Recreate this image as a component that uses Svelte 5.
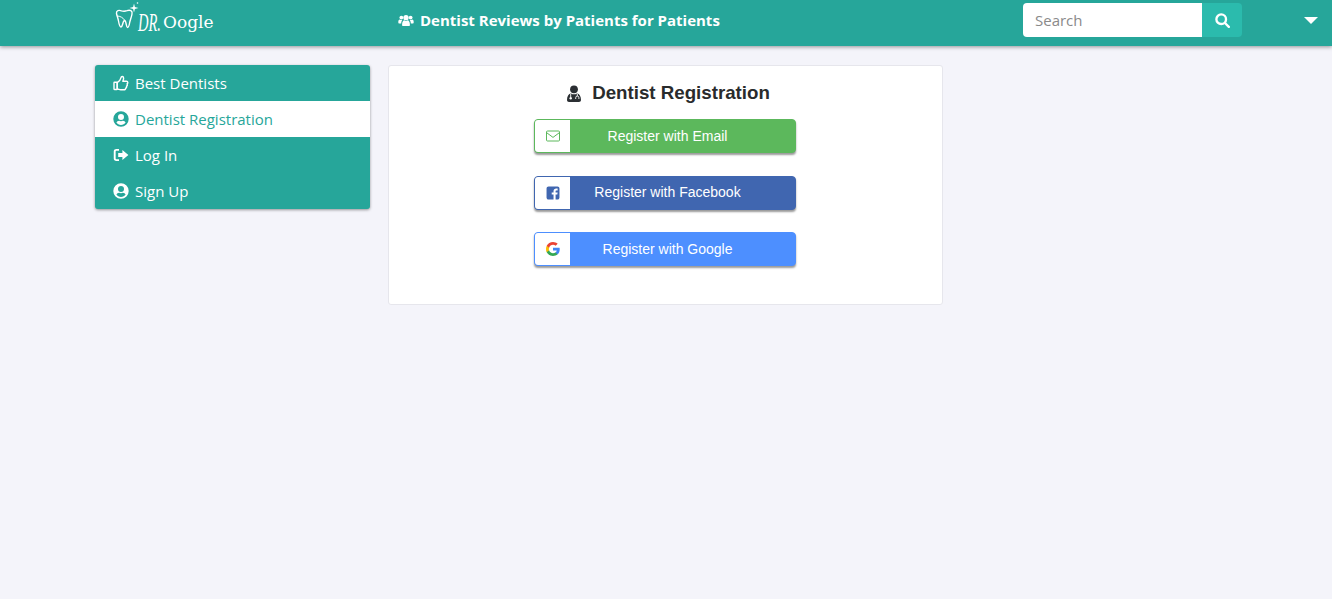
<script>
  const menu = [
    { label: 'Best Dentists', icon: 'thumb' },
    { label: 'Dentist Registration', icon: 'user', active: true },
    { label: 'Log In', icon: 'signout' },
    { label: 'Sign Up', icon: 'user' }
  ];
  const buttons = [
    { label: 'Register with Email', cls: 'email', icon: 'mail' },
    { label: 'Register with Facebook', cls: 'fb', icon: 'fb' },
    { label: 'Register with Google', cls: 'google', icon: 'g' }
  ];
</script>

{#snippet menuIcon(name)}
  {#if name === 'thumb'}
    <svg class="mi" viewBox="0 0 16 16" fill="none" stroke="currentColor" stroke-width="1.4" stroke-linejoin="round">
      <rect x="1" y="7.2" width="3.2" height="7.3" rx="0.5" />
      <path d="M4.2 7.6 C6 6.6 7.6 4.6 8 2.6 C8.2 1.2 10.4 1 10.6 3 C10.8 4.4 10 5.4 9.8 6.2 H13.4 C15.2 6.2 15.2 8.4 14 8.8 C14.8 9.8 14.2 11 13.5 11.2 C13.9 12.2 13.2 13.2 12.5 13.3 C12.7 14.3 12 14.8 11 14.8 H7.6 C6.4 14.8 5.4 14 4.2 14 Z" />
    </svg>
  {:else if name === 'user'}
    <svg class="mi" viewBox="0 0 16 16">
      <path fill="currentColor" fill-rule="evenodd" d="M8 .3a7.7 7.700 0 1 0 0 15.400A7.700 7.700 0 0 0 8 .3ZM8 3a3 3 0 1 1 0 6A3 3 0 0 1 8 3ZM8 13.900c-1.900 0-3.600-.9-4.600-2.300.4-1.100 1.500-1.900 2.700-1.900.6.300 1.200.5 1.900.5s1.300-.2 1.900-.5c1.200 0 2.300.8 2.700 1.900-1 1.400-2.700 2.300-4.600 2.300Z" />
    </svg>
  {:else}
    <svg class="mi" viewBox="0 0 16 16">
      <path fill="none" stroke="currentColor" stroke-width="1.900" d="M6 2.900H3.400C2.400 2.900 1.700 3.500 1.700 4.400v7.200c0 .9.700 1.500 1.700 1.500H6" />
      <path fill="currentColor" d="M9.400 2.900 15.400 8l-6 5.100V10.100H5.200V5.900h4.200Z" />
    </svg>
  {/if}
{/snippet}

{#snippet btnIcon(name)}
  {#if name === 'mail'}
    <svg class="bi" viewBox="0 0 14 12" fill="none" stroke="#5cb85c" stroke-width="1">
      <rect x="0.5" y="1" width="13" height="10" rx="1" />
      <path d="M0.8 2.800 7 7.400l6.200-4.600" />
    </svg>
  {:else if name === 'fb'}
    <svg class="bi" viewBox="0 0 13 13">
      <path fill="#4066b0" d="M2.400.5h8.200c1.100 0 1.900.8 1.900 1.900v8.200c0 1.100-.8 1.900-1.900 1.900H8.900V8h1.600l.3-1.900H8.900V5c0-.6.2-.9.9-.9h1V2.400c-.3 0-.8-.1-1.300-.1-1.500 0-2.500.9-2.500 2.500v1.300H5.300V8H7v4.500H2.400c-1.100 0-1.900-.8-1.900-1.900V2.400C.5 1.300 1.300.5 2.400.5Z" />
    </svg>
  {:else}
    <svg class="bi" viewBox="0 0 18 18">
      <path fill="#4285F4" d="M17.640 9.200c0-.637-.057-1.251-.164-1.840H9v3.481h4.844c-.209 1.125-.843 2.078-1.796 2.717v2.258h2.908c1.702-1.567 2.684-3.874 2.684-6.615z" />
      <path fill="#34A853" d="M9 18c2.430 0 4.467-.806 5.956-2.180l-2.908-2.259c-.806.540-1.837.860-3.048.860-2.344 0-4.328-1.584-5.036-3.711H.957v2.332C2.438 15.983 5.482 18 9 18z" />
      <path fill="#FBBC05" d="M3.964 10.710c-.180-.540-.282-1.117-.282-1.710s.102-1.170.282-1.710V4.958H.957C.347 6.173 0 7.548 0 9s.348 2.827.957 4.042l3.007-2.332z" />
      <path fill="#EA4335" d="M9 3.580c1.321 0 2.508.454 3.440 1.345l2.582-2.580C13.463.891 11.426 0 9 0 5.482 0 2.438 2.017.957 4.958L3.964 7.290C4.672 5.163 6.656 3.580 9 3.580z" />
    </svg>
  {/if}
{/snippet}

<header class="nav">
  <a class="logo" href="#top">
    <svg class="tooth" viewBox="0 0 26 30" fill="none" stroke="#fff" stroke-width="1.400" stroke-linecap="round">
      <path d="M2.500 13.500 C2 10.500 5 9.800 7.500 10.800 C9.500 11.500 11 11.400 13 10.700 C16 9.500 18.800 10.800 18 14 C17.500 17 16.500 19 15.800 22 C15.300 25 14.500 27.500 13.500 27.500 C12.500 27.500 12.500 24 11.500 21.500 C11 20.500 10 20.500 9.500 21.500 C8.500 24 8.300 27 7 27 C5.700 27 5 24 4.500 21 C4 18 3 16 2.500 13.500 Z" />
      <path d="M3.500 16 C6 16 9 17.500 11 20.500" stroke-width="1" />
      <path fill="#fff" stroke="none" d="M20 3.500 20.900 7.100 24.500 8 20.900 8.900 20 12.500 19.100 8.900 15.500 8 19.100 7.100Z" />
      <circle cx="23.500" cy="3" r="0.800" fill="#fff" stroke="none" />
    </svg>
    <span class="dr">DR.</span><span class="oogle">Oogle</span>
  </a>
  <div class="tagline">
    <svg class="users" viewBox="0 0 18 14" fill="#fff">
      <circle cx="9" cy="4.300" r="3.100" /><circle cx="3.600" cy="4.200" r="2.200" /><circle cx="14.400" cy="4.200" r="2.200" />
      <path d="M4.400 12.800c0-3.600 1.500-5.400 2.600-5.400.6.400 1.200.7 2 .7s1.400-.3 2-.7c1.100 0 2.600 1.800 2.600 5.400 0 .7-.6 1.200-1.200 1.200H5.600c-.6 0-1.200-.5-1.200-1.200Z" />
      <path d="M0 9.500c0-1.800.6-3 1.800-3 .5.400 1.100.6 1.800.6.300 0 .6 0 1-.1-.7 1-1.200 2.500-1.200 4H1.200C.5 11 0 10.400 0 9.500Z" />
      <path d="M18 9.500c0-1.800-.6-3-1.800-3-.5.400-1.100.6-1.800.6-.3 0-.6 0-1-.1.700 1 1.200 2.500 1.200 4h2.200c.7 0 1.200-.6 1.200-1.500Z" />
    </svg>
    <span>Dentist Reviews by Patients for Patients</span>
  </div>
  <form class="search" onsubmit={(e) => e.preventDefault()}>
    <input type="text" placeholder="Search" />
    <button type="submit" aria-label="Search">
      <svg viewBox="0 0 14 14" fill="none" stroke="#fff" stroke-width="2.200" stroke-linecap="round">
        <circle cx="5.800" cy="5.800" r="4.500" /><path d="M9.300 9.300 12.900 12.900" />
      </svg>
    </button>
  </form>
  <span class="caret"></span>
</header>

<main class="page">
  <nav class="side">
    {#each menu as item}
      <a class="item" class:active={item.active} href="#top">
        <span class="mi-wrap">{@render menuIcon(item.icon)}</span>
        <span>{item.label}</span>
      </a>
    {/each}
  </nav>

  <section class="card">
    <h2>
      <svg class="md" viewBox="0 0 16 17">
        <circle cx="8" cy="4.300" r="3.900" fill="#2b2f33" />
        <path fill="#2b2f33" d="M1 15c0-4 1.500-6.300 4-6.600.9.600 1.900.9 3 .9s2.100-.3 3-.9c2.500.3 4 2.600 4 6.600 0 1.200-.8 2-2 2H3c-1.200 0-2-.8-2-2Z" />
        <path fill="none" stroke="#fff" stroke-width="0.900" d="M4.700 9v3M11.300 9v2" />
        <circle cx="4.700" cy="13.200" r="1.200" fill="#fff" />
        <path fill="none" stroke="#fff" stroke-width="0.900" d="M9.700 14v-1.300a1.600 1.600 0 0 1 3.200 0V14" />
      </svg>
      <span>Dentist Registration</span>
    </h2>
    <div class="btns">
      {#each buttons as b}
        <a class="btn {b.cls}" href="#top">
          <span class="box">{@render btnIcon(b.icon)}</span>
          <span class="label">{b.label}</span>
        </a>
      {/each}
    </div>
  </section>
</main>

<style>
  :global(body) {
    margin: 0;
    background: #f4f4fa;
    font-family: "Open Sans", sans-serif;
  }
  a {
    text-decoration: none;
  }
  .nav {
    height: 46px;
    background: #26a69a;
    box-shadow: 0 1px 4px rgba(0, 0, 0, 0.4);
    display: flex;
    align-items: center;
    box-sizing: border-box;
    padding: 0 0 6px 114px;
    color: #fff;
  }
  .logo {
    width: 284px;
    flex: none;
    display: flex;
    align-items: flex-start;
    color: #fff;
    height: 40px;
  }
  .tooth {
    width: 26px;
    height: 30px;
    flex: none;
  }
  .dr {
    font-family: "Liberation Serif", serif;
    font-style: italic;
    font-size: 25px;
    line-height: 24px;
    width: 22px;
    flex: none;
    margin-left: -2px;
    margin-top: 11px;
    white-space: nowrap;
    transform: scaleX(0.58);
    transform-origin: left top;
  }
  .oogle {
    font-family: "DejaVu Serif", serif;
    font-size: 17px;
    line-height: 20px;
    margin-left: 3px;
    margin-top: 12px;
  }
  .tagline {
    width: 625px;
    flex: none;
    font-weight: 700;
    font-size: 15px;
    display: flex;
    align-items: center;
  }
  .users {
    width: 16px;
    height: 12px;
    margin-right: 6px;
  }
  .search {
    display: flex;
    width: 219px;
    height: 34px;
    flex: none;
  }
  .search input {
    width: 179px;
    box-sizing: border-box;
    border: 0;
    outline: 0;
    padding: 0 12px;
    border-radius: 4px 0 0 4px;
    font: 15px "Open Sans", sans-serif;
    background: #fff;
  }
  .search input::placeholder {
    color: #8a8a8a;
    opacity: 1;
  }
  .search button {
    width: 40px;
    border: 0;
    padding: 0;
    background: #2bbbad;
    border-radius: 0 4px 4px 0;
    display: flex;
    align-items: center;
    justify-content: center;
  }
  .search button svg {
    width: 15px;
    height: 15px;
  }
  .caret {
    width: 0;
    height: 0;
    margin-left: 62px;
    margin-top: 1px;
    border-left: 7px solid transparent;
    border-right: 7px solid transparent;
    border-top: 7px solid #fff;
  }
  .page {
    display: flex;
    align-items: flex-start;
    gap: 18px;
    padding: 19px 0 0 95px;
  }
  .side {
    width: 275px;
    flex: none;
    background: #26a69a;
    border-radius: 3px;
    box-shadow: 0 1px 3px rgba(0, 0, 0, 0.4);
    overflow: hidden;
  }
  .item {
    height: 36px;
    display: flex;
    align-items: center;
    padding-left: 18px;
    color: #fff;
    font-size: 15px;
  }
  .item.active {
    background: #fff;
    color: #26a69a;
  }
  .mi-wrap {
    width: 22px;
    display: flex;
    flex: none;
  }
  .mi {
    width: 16px;
    height: 16px;
  }
  .card {
    width: 555px;
    height: 240px;
    box-sizing: border-box;
    background: #fff;
    border: 1px solid #e6e6ec;
    border-radius: 3px;
    display: flex;
    flex-direction: column;
    align-items: center;
    padding-top: 16px;
  }
  h2 {
    margin: 0 0 0 5px;
    font: 700 18.720px/22px "Liberation Sans", sans-serif;
    color: #292b2c;
    display: flex;
    align-items: center;
    height: 22px;
  }
  .md {
    width: 16px;
    height: 17px;
    margin-right: 10px;
  }
  .btns {
    margin: 15px 1px 0 0;
    display: flex;
    flex-direction: column;
    gap: 22.500px;
  }
  .btn {
    width: 262px;
    height: 34px;
    box-sizing: border-box;
    display: flex;
    align-items: stretch;
    border: 1px solid;
    border-radius: 4px;
    box-shadow: 0 2px 2px rgba(0, 0, 0, 0.4);
    color: #fff;
    font: 14px/16.100px "Liberation Sans", sans-serif;
    overflow: hidden;
  }
  .box {
    width: 35px;
    flex: none;
    background: #fff;
    display: flex;
    align-items: center;
    justify-content: center;
  }
  .label {
    flex: 1;
    padding-right: 30px;
    display: flex;
    align-items: center;
    justify-content: center;
  }
  .bi {
    width: 14px;
    height: 14px;
  }
  .email {
    background: #5cb85c;
    border-color: #5cb85c;
  }
  .fb {
    background: #4066b0;
    border-color: #4066b0;
  }
  .google {
    background: #4d8fff;
    border-color: #4d8fff;
  }
</style>
